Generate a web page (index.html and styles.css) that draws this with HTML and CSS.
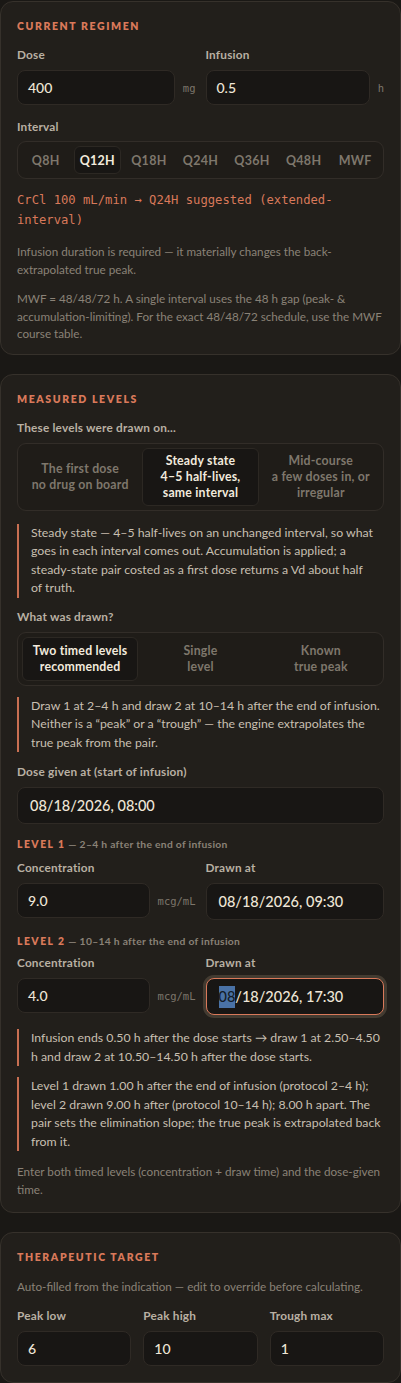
FILE: index.html
```html
<!DOCTYPE html>
<html lang="en">
<head>
<meta charset="utf-8">
<title>Regimen &amp; levels</title>
<link rel="stylesheet" href="styles.css">
</head>
<body>
<main class="page">
  <section class="card card-first">
    <h2 class="card-title">Current regimen</h2>
    <div class="grid-2">
      <div class="field">
        <div class="label">Dose</div>
        <div class="input-row">
          <div class="input">400</div>
          <span class="unit">mg</span>
        </div>
      </div>
      <div class="field">
        <div class="label">Infusion</div>
        <div class="input-row">
          <div class="input">0.5</div>
          <span class="unit">h</span>
        </div>
      </div>
    </div>
    <div class="field mt-15">
      <div class="label label-tight">Interval</div>
      <div class="seg seg-7">
        <div class="seg-opt">Q8H</div>
        <div class="seg-opt active">Q12H</div>
        <div class="seg-opt">Q18H</div>
        <div class="seg-opt">Q24H</div>
        <div class="seg-opt">Q36H</div>
        <div class="seg-opt">Q48H</div>
        <div class="seg-opt">MWF</div>
      </div>
    </div>
    <p class="mono-note">CrCl 100 mL/min → Q24H suggested (extended-interval)</p>
    <p class="muted p1">Infusion duration is required — it materially changes the back-extrapolated true peak.</p>
    <p class="muted p2">MWF = 48/48/72 h. A single interval uses the 48 h gap (peak- &amp; accumulation-limiting). For the exact 48/48/72 schedule, use the MWF course table.</p>
  </section>

  <section class="card">
    <h2 class="card-title">Measured levels</h2>
    <div class="label">These levels were drawn on...</div>
    <div class="seg seg-3 tall">
      <div class="seg-opt"><span>The first dose</span><span>no drug on board</span></div>
      <div class="seg-opt active"><span>Steady state</span><span>4–5 half-lives, same interval</span></div>
      <div class="seg-opt"><span>Mid-course</span><span>a few doses in, or irregular</span></div>
    </div>
    <div class="callout c1">Steady state — 4–5 half-lives on an unchanged interval, so what goes in each interval comes out. Accumulation is applied; a steady-state pair costed as a first dose returns a Vd about half of&nbsp;truth.</div>
    <div class="label l-what">What was drawn?</div>
    <div class="seg seg-3 mid">
      <div class="seg-opt active"><span>Two timed levels</span><span>recommended</span></div>
      <div class="seg-opt"><span>Single</span><span>level</span></div>
      <div class="seg-opt"><span>Known</span><span>true peak</span></div>
    </div>
    <div class="callout c2">Draw 1 at 2–4 h and draw 2 at 10–14 h after the end of infusion. Neither is a “peak” or a “trough” — the engine extrapolates the true peak from the pair.</div>

    <div class="field mt-13">
      <div class="label">Dose given at (start of infusion)</div>
      <div class="input input-lg">08/18/2026, 08:00</div>
    </div>

    <div class="level-head lh1"><span class="lv">Level 1</span> — 2–4 h after the end of infusion</div>
    <div class="grid-2 g-level">
      <div class="field">
        <div class="label">Concentration</div>
        <div class="input-row">
          <div class="input">9.0</div>
          <span class="unit">mcg/mL</span>
        </div>
      </div>
      <div class="field">
        <div class="label">Drawn at</div>
        <div class="input input-lg">08/18/2026, 09:30</div>
      </div>
    </div>

    <div class="level-head lh2"><span class="lv">Level 2</span> — 10–14 h after the end of infusion</div>
    <div class="grid-2 g-level2">
      <div class="field">
        <div class="label">Concentration</div>
        <div class="input-row">
          <div class="input">4.0</div>
          <span class="unit">mcg/mL</span>
        </div>
      </div>
      <div class="field">
        <div class="label">Drawn at</div>
        <div class="input input-lg focus"><span class="sel">08</span>/18/2026, 17:30</div>
      </div>
    </div>

    <div class="callout c3">Infusion ends 0.50 h after the dose starts → draw 1 at 2.50–4.50 h and draw 2 at 10.50–14.50 h after the dose starts.</div>
    <div class="callout c4">Level 1 drawn 1.00 h after the end of infusion (protocol 2–4 h); level 2 drawn 9.00 h after (protocol 10–14 h); 8.00 h apart. The pair sets the elimination slope; the true peak is extrapolated back from it.</div>
    <p class="muted p-end">Enter both timed levels (concentration + draw time) and the dose-given time.</p>
  </section>

  <section class="card card-last">
    <h2 class="card-title">Therapeutic target</h2>
    <p class="muted p-auto">Auto-filled from the indication — edit to override before calculating.</p>
    <div class="grid-3">
      <div class="field">
        <div class="label">Peak low</div>
        <div class="input">6</div>
      </div>
      <div class="field">
        <div class="label">Peak high</div>
        <div class="input">10</div>
      </div>
      <div class="field">
        <div class="label">Trough max</div>
        <div class="input">1</div>
      </div>
    </div>
  </section>
</main>
</body>
</html>
```

FILE: styles.css
```css
* { box-sizing: border-box; }

html, body {
  margin: 0;
  padding: 0;
  background: #1a1815;
}

body {
  font-family: "Lato", "Inter", "Noto Sans", sans-serif;
  color: #cfc6b8;
  -webkit-font-smoothing: antialiased;
}

.page {
  padding-top: 1px;
  display: flex;
  flex-direction: column;
  gap: 19px;
}

.card {
  background: #221f1b;
  border: 1px solid #36312b;
  border-radius: 13px;
  padding: 17px 16px 14px;
}

.card-first {
  padding-bottom: 11px;
}

.card-last {
  padding-bottom: 16px;
}

.card-title {
  margin: 0 0 15px;
  font-size: 10.5px;
  line-height: 14px;
  font-weight: 800;
  letter-spacing: 1.6px;
  text-transform: uppercase;
  color: #d9795a;
}

.label {
  font-size: 11.8px;
  line-height: 14px;
  font-weight: 700;
  letter-spacing: 0.2px;
  color: #b9b0a3;
  margin-bottom: 8px;
}

.label-tight { margin-bottom: 7px; }

.grid-2 {
  display: grid;
  grid-template-columns: 1fr 1fr;
  column-gap: 10px;
}

.grid-3 {
  display: grid;
  grid-template-columns: 1fr 1fr 1fr;
  column-gap: 12px;
}

.input-row {
  display: flex;
  align-items: center;
  gap: 8px;
}

.input-row .input { flex: 1; min-width: 0; }

.input {
  height: 35px;
  background: #181614;
  border: 1px solid #2f2a25;
  border-radius: 8px;
  padding: 0 10px;
  display: flex;
  align-items: center;
  font-size: 14px;
  font-weight: 500;
  color: #efe6d7;
  white-space: nowrap;
}

.input-lg {
  height: 37px;
  padding: 0 12px;
  font-size: 14.5px;
}

.input.focus {
  border-color: #d9795a;
  box-shadow: 0 0 0 3px rgba(120, 104, 88, 0.38);
}

.sel {
  display: inline-block;
  line-height: 22px;
  background: #4a72a6;
  color: #141c28;
}

.unit {
  font-family: "DejaVu Sans Mono", "Liberation Mono", monospace;
  font-size: 10.5px;
  color: #7d766b;
  flex: none;
}

.mt-15 { margin-top: 15px; }
.mt-13 { margin-top: 13px; }

.seg {
  display: grid;
  gap: 4px;
  padding: 4px;
  background: #1f1c18;
  border: 1px solid #322d28;
  border-radius: 9px;
}

.seg-7 { grid-template-columns: repeat(7, 1fr); }
.seg-3 { grid-template-columns: repeat(3, 1fr); }

.seg-opt {
  display: flex;
  flex-direction: column;
  align-items: center;
  justify-content: center;
  text-align: center;
  height: 28px;
  border-radius: 6px;
  font-size: 12.5px;
  letter-spacing: 0.3px;
  font-weight: 700;
  color: #7e776c;
  border: 1px solid transparent;
}

.seg-opt.active {
  background: #181614;
  border-color: #2c2823;
  color: #f2eadd;
}

.seg.tall .seg-opt {
  height: 58px;
  font-size: 12.3px;
  letter-spacing: 0.2px;
  line-height: 16px;
  padding: 0 4px;
}

.seg.mid .seg-opt {
  height: 44px;
  font-size: 12.3px;
  letter-spacing: 0.2px;
  line-height: 16px;
  padding: 0 4px;
}

.mono-note {
  margin: 11px 0 0;
  font-family: "DejaVu Sans Mono", "Liberation Mono", monospace;
  font-size: 12.2px;
  line-height: 20px;
  color: #d9795a;
}

.muted {
  font-size: 11.7px;
  line-height: 17.5px;
  color: #8a8277;
  margin: 0;
}

.p1 { margin-top: 13px; }
.p2 { margin-top: 12px; }

.callout {
  border-left: 2px solid #c86f52;
  padding-left: 12px;
  font-size: 12.3px;
  line-height: 18.5px;
  color: #c8bfb1;
}

.seg + .callout { margin-top: 13px; }
.c2 { margin-top: 11px !important; }
.l-what { margin-top: 12px; }

.level-head {
  font-size: 10.3px;
  line-height: 14px;
  font-weight: 700;
  color: #8a8277;
  letter-spacing: 0.3px;
}

.level-head .lv {
  color: #d9795a;
  font-weight: 800;
  letter-spacing: 1.5px;
  text-transform: uppercase;
}

.lh1 { margin-top: 13px; }
.lh2 { margin-top: 14px; }
.g-level { margin-top: 10px; }
.g-level2 { margin-top: 8px; }

.c3 { margin-top: 14px; }
.c4 { margin-top: 11px; }
.p-end { margin-top: 11px; line-height: 18px; }

.p-auto { margin-top: -1px; margin-bottom: 13px; }
```
